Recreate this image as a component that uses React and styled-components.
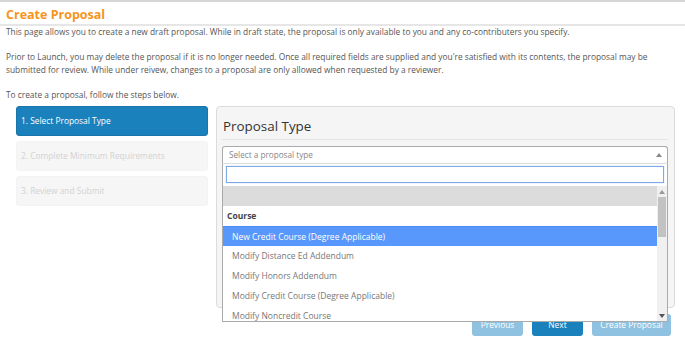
import React from 'react';
import styled, { createGlobalStyle } from 'styled-components';

const GlobalStyle = createGlobalStyle`
  body {
    margin: 0;
    background: #fff;
    font-family: "Open Sans", "Noto Sans", Arial, sans-serif;
    color: #555;
  }
`;

const Page = styled.div`
  width: 685px;
  height: 349px;
  box-sizing: border-box;
  border-top: 2px solid #d6d6d6;
  overflow: hidden;
`;

const Title = styled.h1`
  margin: 0;
  padding: 4px 6px 1px;
  font-size: 12.5px;
  font-weight: 700;
  color: #f7941d;
  border-bottom: 2px solid #e6e6e6;
`;

const Intro = styled.div`
  padding: 0 6px;
  margin-bottom: 4px;
  font-size: 8.35px;
  line-height: 12.6px;
  color: #555;

  p {
    margin: 0 0 12.6px;
  }
  p:last-child {
    margin-bottom: 0;
  }
`;

const Wizard = styled.div`
  display: grid;
  grid-template-columns: 192px 459px;
  column-gap: 8px;
  margin: 0 0 0 16px;
`;

const Steps = styled.div`
  display: flex;
  flex-direction: column;
  gap: 5px;
`;

const Step = styled.div`
  height: 30px;
  box-sizing: border-box;
  display: flex;
  align-items: center;
  padding-left: 4px;
  border-radius: 3px;
  font-size: 8.4px;
  background: ${(p) => (p.$active ? '#1b81bd' : '#f6f6f6')};
  color: ${(p) => (p.$active ? '#fff' : '#d2d2d2')};
  border: 1px solid ${(p) => (p.$active ? '#1874aa' : '#f3f3f3')};
`;

const Right = styled.div`
  display: flex;
  flex-direction: column;
`;

const Panel = styled.div`
  height: 202px;
  box-sizing: border-box;
  background: #f5f5f5;
  border: 1px solid #dcdcdc;
  border-radius: 4px;
  padding: 0 6px 0 5px;
`;

const PanelHeading = styled.h2`
  margin: 0;
  padding: 10px 0 4px 1px;
  font-size: 13.4px;
  font-weight: 400;
  color: #333;
  border-bottom: 1px solid #e4e4e4;
`;

const SelectWrap = styled.div`
  position: relative;
  margin-top: 6px;
`;

const SelectBox = styled.div`
  height: 18px;
  box-sizing: border-box;
  background: #fff;
  border: 1px solid #aaa;
  border-bottom-color: #ddd;
  border-radius: 3px 3px 0 0;
  display: flex;
  align-items: center;
  justify-content: space-between;
  padding: 0 5px 0 6px;
  font-size: 8.2px;
  color: #888;
`;

const Caret = styled.span`
  width: 0;
  height: 0;
  border-left: 3px solid transparent;
  border-right: 3px solid transparent;
  border-${(p) => (p.$down ? 'top' : 'bottom')}: 4px solid ${(p) => p.$color || '#888'};
`;

const Dropdown = styled.div`
  position: absolute;
  top: 18px;
  left: 0;
  right: 0;
  height: 158px;
  box-sizing: border-box;
  background: #fff;
  border: 1px solid #aaa;
  border-top: none;
  z-index: 5;
  display: flex;
  flex-direction: column;
`;

const Search = styled.div`
  margin: 2px 3px 3px 3px;
  height: 17px;
  box-sizing: border-box;
  border: 1px solid #7fa9e6;
  box-shadow: 0 0 1px #9ec1f0;
`;

const ListArea = styled.div`
  flex: 1;
  display: flex;
  min-height: 0;
`;

const List = styled.div`
  flex: 1;
  overflow: hidden;
`;

const Option = styled.div`
  height: 20px;
  display: flex;
  align-items: center;
  padding-left: ${(p) => (p.$group ? '4px' : '9px')};
  font-size: 8.5px;
  font-weight: ${(p) => (p.$group ? 700 : 400)};
  color: ${(p) => (p.$active ? '#fff' : p.$group ? '#444' : '#777')};
  background: ${(p) => (p.$active ? '#5897fb' : p.$blank ? '#dcdcdc' : '#fff')};
  border-top: ${(p) => (p.$active ? '1px solid #4a8cf0' : 'none')};
  box-sizing: border-box;
`;

const Scrollbar = styled.div`
  width: 10px;
  background: #f0f0f0;
  display: flex;
  flex-direction: column;
  align-items: center;
  padding: 4px 0 3px;
  box-sizing: border-box;
`;

const Thumb = styled.div`
  width: 8px;
  height: 40px;
  margin-top: 3px;
  background: #c2c2c2;
`;

const Spacer = styled.div`
  flex: 1;
`;

const Footer = styled.div`
  display: flex;
  justify-content: flex-end;
  gap: 9px;
  margin-top: 6px;
  padding-right: 4px;
`;

const Button = styled.div`
  height: 22px;
  box-sizing: border-box;
  padding: 0 8px;
  min-width: ${(p) => p.$w || 0}px;
  display: flex;
  align-items: center;
  justify-content: center;
  border-radius: 3px;
  font-size: 8.4px;
  color: #fff;
  background: ${(p) => (p.$primary ? '#1b81bd' : '#8fc2e1')};
`;

const options = [
  'Modify Distance Ed Addendum',
  'Modify Honors Addendum',
  'Modify Credit Course (Degree Applicable)',
  'Modify Noncredit Course',
];

export default function App() {
  return (
    <Page>
      <GlobalStyle />
      <Title>Create Proposal</Title>
      <Intro>
        <p>
          This page allows you to create a new draft proposal. While in draft state, the proposal is only available to you
          and any co-contributers you specify.
        </p>
        <p>
          Prior to Launch, you may delete the proposal if it is no longer needed. Once all required fields are supplied and
          you're satisfied with its contents, the proposal may be submitted for review. While under reivew, changes to a
          proposal are only allowed when requested by a reviewer.
        </p>
        <p>To create a proposal, follow the steps below.</p>
      </Intro>
      <Wizard>
        <Steps>
          <Step $active>1. Select Proposal Type</Step>
          <Step>2. Complete Minimum Requirements</Step>
          <Step>3. Review and Submit</Step>
        </Steps>
        <Right>
          <Panel>
            <PanelHeading>Proposal Type</PanelHeading>
            <SelectWrap>
              <SelectBox>
                Select a proposal type
                <Caret />
              </SelectBox>
              <Dropdown>
                <Search />
                <ListArea>
                  <List>
                    <Option $blank />
                    <Option $group>Course</Option>
                    <Option $active>New Credit Course (Degree Applicable)</Option>
                    {options.map((o) => (
                      <Option key={o}>{o}</Option>
                    ))}
                  </List>
                  <Scrollbar>
                    <Caret $color="#999" />
                    <Thumb />
                    <Spacer />
                    <Caret $down $color="#555" />
                  </Scrollbar>
                </ListArea>
              </Dropdown>
            </SelectWrap>
          </Panel>
          <Footer>
            <Button $w={51}>Previous</Button>
            <Button $primary $w={51}>Next</Button>
            <Button $w={79}>Create Proposal</Button>
          </Footer>
        </Right>
      </Wizard>
    </Page>
  );
}
